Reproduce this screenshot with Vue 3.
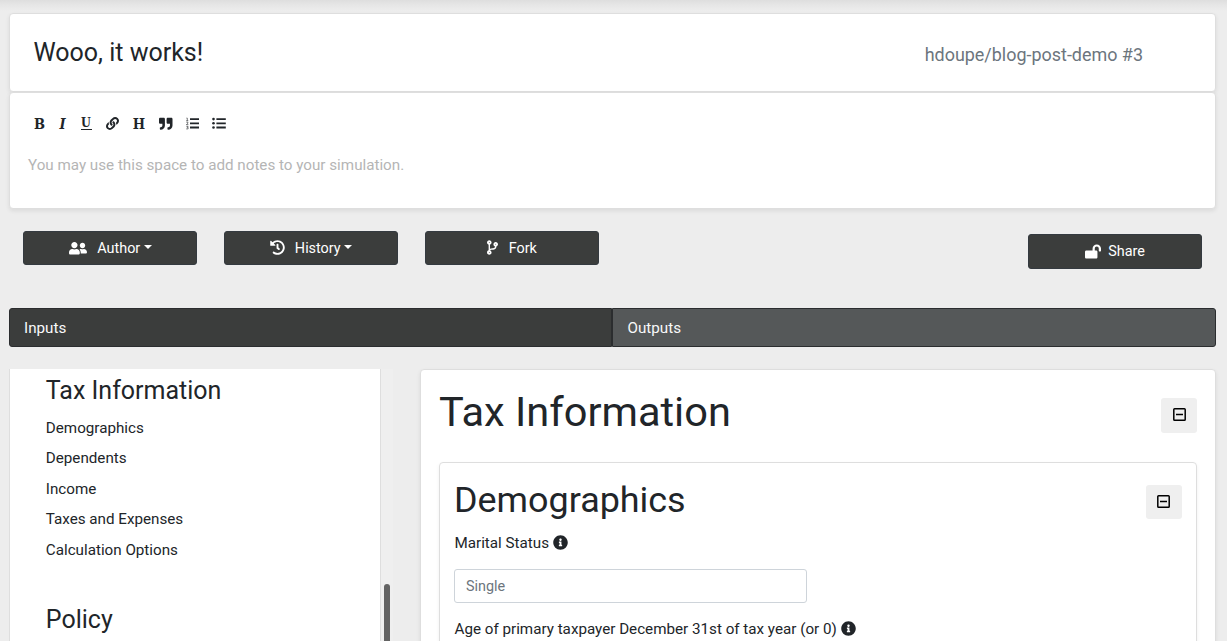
<script setup>
const sections = ['Demographics', 'Dependents', 'Income', 'Taxes and Expenses', 'Calculation Options']
const infoPath = 'M256 8C119.043 8 8 119.083 8 256c0 136.997 111.043 248 248 248s248-111.003 248-248C504 119.083 392.957 8 256 8zm0 110c23.196 0 42 18.804 42 42s-18.804 42-42 42-42-18.804-42-42 18.804-42 42-42zm56 254c0 6.627-5.373 12-12 12h-88c-6.627 0-12-5.373-12-12v-24c0-6.627 5.373-12 12-12h12v-64h-12c-6.627 0-12-5.373-12-12v-24c0-6.627 5.373-12 12-12h64c6.627 0 12 5.373 12 12v100h12c6.627 0 12 5.373 12 12v24z'
</script>

<template>
  <div class="page">
    <header class="card title-card">
      <h3 class="title">Wooo, it works!</h3>
      <span class="owner">hdoupe/blog-post-demo #3</span>
    </header>

    <section class="card notes">
      <div class="toolbar">
        <span class="letter b">B</span>
        <span class="letter i">I</span>
        <span class="letter u">U</span>
        <svg class="link" viewBox="0 0 512 512"><path d="M326.612 185.391c59.747 59.809 58.927 155.698.36 214.59-.11.12-.24.25-.36.37l-67.2 67.2c-59.27 59.27-155.699 59.262-214.96 0-59.27-59.26-59.27-155.7 0-214.96l37.106-37.106c9.84-9.84 26.786-3.3 27.294 10.606.648 17.722 3.826 35.527 9.69 52.721 1.986 5.822.567 12.262-3.783 16.612l-13.087 13.087c-28.026 28.026-28.905 73.66-1.155 101.96 28.024 28.579 74.086 28.749 102.325.51l67.2-67.19c28.191-28.191 28.073-73.757 0-101.83-3.701-3.694-7.429-6.564-10.341-8.569a16.037 16.037 0 0 1-6.947-12.606c-.396-10.567 3.348-21.456 11.698-29.806l21.054-21.055c5.521-5.521 14.182-6.199 20.584-1.731a152.482 152.482 0 0 1 20.522 17.197zM467.547 44.449c-59.261-59.262-155.69-59.27-214.96 0l-67.2 67.2c-.12.12-.25.25-.36.37-58.566 58.892-59.387 154.781.36 214.59a152.454 152.454 0 0 0 20.521 17.196c6.402 4.468 15.064 3.789 20.584-1.731l21.054-21.055c8.35-8.35 12.094-19.239 11.698-29.806a16.037 16.037 0 0 0-6.947-12.606c-2.912-2.005-6.64-4.875-10.341-8.569-28.073-28.073-28.191-73.639 0-101.83l67.2-67.19c28.239-28.239 74.3-28.069 102.325.51 27.75 28.3 26.872 73.934-1.155 101.96l-13.087 13.087c-4.35 4.35-5.769 10.79-3.783 16.612 5.864 17.194 9.042 34.999 9.69 52.721.509 13.906 17.454 20.446 27.294 10.606l37.106-37.106c59.271-59.259 59.271-155.699.001-214.959z"/></svg>
        <span class="letter h">H</span>
        <svg class="quote" viewBox="0 0 512 512"><path d="M464 32H336c-26.5 0-48 21.5-48 48v128c0 26.5 21.5 48 48 48h80v64c0 35.3-28.7 64-64 64h-8c-13.3 0-24 10.7-24 24v48c0 13.3 10.7 24 24 24h8c88.4 0 160-71.6 160-160V80c0-26.5-21.5-48-48-48zm-288 0H48C21.5 32 0 53.5 0 80v128c0 26.5 21.5 48 48 48h80v64c0 35.3-28.7 64-64 64h-8c-13.3 0-24 10.7-24 24v48c0 13.3 10.7 24 24 24h8c88.4 0 160-71.6 160-160V80c0-26.5-21.5-48-48-48z"/></svg>
        <svg class="ol" viewBox="0 0 13 13">
          <path d="M4 1.2h9v1.8H4zM4 5.4h9v1.8H4zM4 9.6h9v1.8H4z"/>
          <path d="M.4 1.1h.9v2.6M.2 3.7h2.1M.3 5.2h1.6v1L.4 7.6h2M.3 9.3h1.8L1.2 10.4h.9v1.5H.2" fill="none" stroke="currentColor" stroke-width=".6"/>
        </svg>
        <svg class="ul" viewBox="0 0 14 13">
          <path d="M4.4 1.2h9.4v1.8H4.4zM4.4 5.4h9.4v1.8H4.4zM4.4 9.6h9.4v1.8H4.4z"/>
          <circle cx="1.5" cy="2.1" r="1.3"/><circle cx="1.5" cy="6.3" r="1.3"/><circle cx="1.5" cy="10.5" r="1.3"/>
        </svg>
      </div>
      <p class="placeholder">You may use this space to add notes to your simulation.</p>
    </section>

    <div class="actions">
      <button class="btn">
        <svg class="friends" viewBox="0 0 640 512"><path d="M192 256c61.9 0 112-50.1 112-112S253.9 32 192 32 80 82.1 80 144s50.1 112 112 112zm76.8 32h-8.3c-20.8 10-43.9 16-68.5 16s-47.6-6-68.5-16h-8.3C51.6 288 0 339.6 0 403.2V432c0 26.5 21.5 48 48 48h288c26.5 0 48-21.5 48-48v-28.8c0-63.6-51.6-115.2-115.2-115.2zM480 256c53 0 96-43 96-96s-43-96-96-96-96 43-96 96 43 96 96 96zm48 32h-3.8c-13.9 4.8-28.6 8-44.2 8s-30.3-3.2-44.2-8H432c-20.4 0-39.2 5.9-55.7 15.4 24.4 26.3 39.7 61.2 39.7 99.8v38.4c0 2.2-.5 4.3-.6 6.4H592c26.5 0 48-21.5 48-48 0-61.9-50.1-112-112-112z"/></svg>
        <span>Author</span><i class="caret"></i>
      </button>
      <button class="btn">
        <svg class="history" viewBox="0 0 512 512"><path d="M504 255.531c.253 136.64-111.18 248.372-247.82 248.468-59.015.042-113.223-20.53-155.822-54.911-11.077-8.94-11.905-25.541-1.839-35.607l11.267-11.267c8.609-8.609 22.353-9.551 31.891-1.984C173.062 425.135 212.781 440 256 440c101.705 0 184-82.311 184-184 0-101.705-82.311-184-184-184-48.814 0-93.149 18.969-126.068 49.932l50.754 50.754c10.08 10.08 2.941 27.314-11.313 27.314H24c-8.837 0-16-7.163-16-16V38.627c0-14.254 17.234-21.393 27.314-11.314l49.372 49.372C129.209 34.136 189.552 8 256 8c136.81 0 247.747 110.78 248 247.531zm-180.912 78.784l9.823-12.63c8.138-10.463 6.253-25.542-4.21-33.679L288 256.349V152c0-13.255-10.745-24-24-24h-16c-13.255 0-24 10.745-24 24v135.651l65.409 50.874c10.463 8.137 25.541 6.253 33.679-4.21z"/></svg>
        <span>History</span><i class="caret"></i>
      </button>
      <button class="btn">
        <svg class="fork" viewBox="0 0 384 512"><path d="M384 144c0-44.2-35.8-80-80-80s-80 35.8-80 80c0 36.4 24.3 67.1 57.5 76.8-.6 16.1-4.2 28.5-11 36.9-15.4 19.2-49.3 22.4-85.2 25.7-28.2 2.6-57.4 5.4-81.3 16.9v-144c32.5-10.2 56-40.5 56-76.3 0-44.2-35.8-80-80-80S0 35.8 0 80c0 35.8 23.5 66.1 56 76.3v199.3C23.5 365.9 0 396.2 0 432c0 44.2 35.8 80 80 80s80-35.8 80-80c0-34-21.2-63.1-51.2-74.6 3.1-5.2 7.8-9.8 14.9-13.4 16.2-8.2 40.4-10.4 66.1-12.8 42.2-3.9 90-8.4 118.2-43.4 14-17.4 21.1-39.8 21.6-67.9 31.6-10.8 54.4-40.7 54.4-75.9zM80 64c8.8 0 16 7.2 16 16s-7.2 16-16 16-16-7.2-16-16 7.2-16 16-16zm0 384c-8.8 0-16-7.2-16-16s7.2-16 16-16 16 7.2 16 16-7.2 16-16 16zm224-320c8.8 0 16 7.2 16 16s-7.2 16-16 16-16-7.2-16-16 7.2-16 16-16z"/></svg>
        <span>Fork</span>
      </button>
      <button class="btn share">
        <svg class="lock" viewBox="0 0 576 512"><path d="M423.5 0C339.5.3 272 69.5 272 153.5V224H48c-26.5 0-48 21.5-48 48v192c0 26.5 21.5 48 48 48h352c26.5 0 48-21.5 48-48V272c0-26.5-21.5-48-48-48h-48v-71.1c0-39.6 31.7-72.5 71.3-72.9 40-.4 72.7 32.1 72.7 72v80c0 13.3 10.7 24 24 24h32c13.3 0 24-10.7 24-24v-80C576 68 507.5-.3 423.5 0z"/></svg>
        <span>Share</span>
      </button>
    </div>

    <nav class="tabs">
      <a class="tab active">Inputs</a>
      <a class="tab">Outputs</a>
    </nav>

    <div class="columns">
      <aside class="sidebar">
        <div class="menu">
          <h4>Tax Information</h4>
          <ul>
            <li v-for="s in sections" :key="s">{{ s }}</li>
          </ul>
          <h4>Policy</h4>
        </div>
        <div class="track"><div class="thumb"></div></div>
      </aside>

      <main class="card main">
        <div class="row">
          <h1>Tax Information</h1>
          <button class="toggle"><svg viewBox="0 0 13 13"><rect x=".8" y=".8" width="11.4" height="11.4" rx=".8"/><path d="M3 6.5h7"/></svg></button>
        </div>
        <section class="inner">
          <div class="row">
            <h2>Demographics</h2>
            <button class="toggle"><svg viewBox="0 0 13 13"><rect x=".8" y=".8" width="11.4" height="11.4" rx=".8"/><path d="M3 6.5h7"/></svg></button>
          </div>
          <label class="field">Marital Status <svg viewBox="0 0 512 512"><path :d="infoPath"/></svg></label>
          <input class="input" placeholder="Single">
          <label class="field age">Age of primary taxpayer December 31st of tax year (or 0) <svg viewBox="0 0 512 512"><path :d="infoPath"/></svg></label>
        </section>
      </main>
    </div>
  </div>
</template>

<style>
body { background: #ededed; overflow: hidden; }
</style>

<style scoped>
* { box-sizing: border-box; }
.page {
  height: 641px;
  overflow: hidden;
  padding: 13px 11px 0 9px;
  font-family: Roboto, "Liberation Sans", sans-serif;
  font-size: 15.2px;
  line-height: 23px;
  color: #212529;
  background: linear-gradient(#dedede, #e6e6e6 5px, #ededed 11px);
}
h1, h2, h3, h4, p, ul { margin: 0; padding: 0; font-weight: 400; }
svg { fill: currentColor; flex: none; }
.card {
  background: #fff;
  border: 1px solid #dedede;
  border-radius: 4px;
  box-shadow: 0 2px 4px rgba(0, 0, 0, .08);
}
.title-card {
  display: flex;
  justify-content: space-between;
  height: 79px;
  padding: 23px 72px 0 23.5px;
}
.title { font-size: 25px; line-height: 31px; }
.owner { color: #6c757d; font-size: 17.95px; line-height: 35px; }
.notes { height: 117px; padding: 23px 18px 0; }
.toolbar { display: flex; align-items: center; height: 15px; padding-left: 6px; }
.letter {
  font: bold 14.5px/13px "DejaVu Serif Condensed", "DejaVu Serif", serif;
  font-stretch: condensed;
  display: flex;
  justify-content: center;
  height: 13px;
  width: 11px;
}
.i { font-style: italic; margin-left: 12px; }
.u { margin-left: 12.5px; border-bottom: 1.5px solid; font-size: 12.5px; line-height: 11px; }
.link { width: 13px; height: 13px; margin-left: 14px; }
.h { width: 13px; margin-left: 14px; }
.quote { width: 13.5px; height: 13.5px; margin-left: 13.5px; }
.ol { width: 13px; height: 13px; margin-left: 13.5px; }
.ul { width: 14px; height: 13px; margin-left: 13px; }
.placeholder { color: #b5b5b5; margin-top: 23px; }
.actions { display: flex; gap: 27px; height: 99px; padding: 22px 14px 0; }
.btn {
  display: flex;
  align-items: center;
  justify-content: center;
  width: 174px;
  height: 34px;
  padding: 0;
  border: 1px solid #343a40;
  border-radius: 3px;
  background: #3b3d3c;
  color: #fff;
  font: 14.4px/20px Roboto, "Liberation Sans", sans-serif;
}
.btn span { padding-top: 1px; }
.share { height: 35px; margin: 3px 0 0 auto; }
.share span { padding: 0; }
.friends { width: 18px; height: 14.4px; margin: 0 10px 0 1px; }
.history { width: 15px; height: 15px; margin: -1px 10px 0 0; }
.fork { width: 11px; height: 15px; margin: -1px 10.5px 0 0; }
.lock { width: 16px; height: 15px; margin: -1px 7px 0 0; }
.caret { border: 4.3px solid transparent; border-top-color: #fff; border-bottom: 0; margin-left: 3.5px; margin-top: -2px; }
.tabs { display: flex; height: 39px; }
.tab {
  flex: 1;
  padding: 8px 14.5px;
  color: #f8f9fa;
  background: #555859;
  border: 1px solid #2b2d2f;
  border-radius: 0 3px 3px 0;
}
.tab.active { flex: none; width: 603px; padding-left: 14px; background: #3b3d3c; border-radius: 3px 0 0 3px; }
.columns { display: flex; justify-content: space-between; align-items: flex-start; height: 294px; padding-top: 22px; }
.sidebar { display: flex; width: 384px; height: 272px; }
.menu { width: 372px; background: #fff; border: solid #dedede; border-width: 0 1px; padding: 5px 36px 0 35.8px; }
h4 { font-size: 25px; line-height: 34px; }
ul { list-style: none; padding: 4.6px 0 38px; }
li { height: 30.5px; line-height: 31px; }
.track { flex: 1; background: #efefef; padding: 215px 3px 0; }
.thumb { width: 6px; height: 60px; background: #636363; border-radius: 3px; }
.main { width: 796px; height: 300px; padding: 18px; }
.row { display: flex; justify-content: space-between; }
h1 { font-size: 41.55px; line-height: 48px; }
h2 { font-size: 35.9px; line-height: 42px; }
.toggle {
  display: flex;
  align-items: center;
  justify-content: center;
  width: 36px;
  height: 35px;
  margin-top: 10px;
  padding: 0 0 2px;
  border: 0;
  border-radius: 3px;
  background: #efefef;
  color: #000;
}
.toggle svg { width: 13px; height: 13px; fill: none; stroke: currentColor; stroke-width: 1.5; }
.inner { height: 220px; margin-top: 26px; padding: 16px 14px; border: 1px solid #dedede; border-radius: 4px; box-shadow: 0 2px 4px rgba(0, 0, 0, .06); }
.inner .toggle { height: 34px; margin-top: 6px; padding: 0 1px 1px 0; }
.field { display: flex; align-items: center; gap: 4.5px; height: 23px; margin-top: 11px; padding-left: .5px; }
.field svg { width: 15px; height: 15px; margin-top: -2px; }
.input {
  display: block;
  width: 353px;
  height: 34px;
  margin-top: 14px;
  padding: 0 11px;
  border: 1px solid #ced4da;
  border-radius: 3px;
  font: 14.4px Roboto, "Liberation Sans", sans-serif;
}
.input::placeholder { color: #6c757d; opacity: 1; }
.age { margin-top: 15px; }
</style>
